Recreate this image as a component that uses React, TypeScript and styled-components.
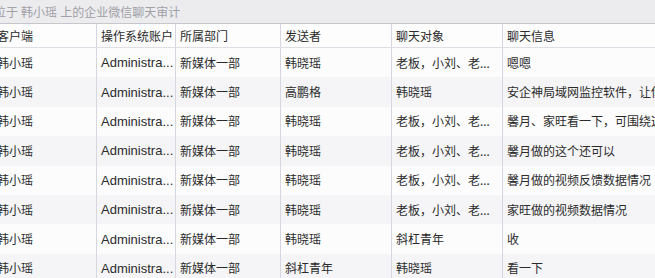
import styled, { createGlobalStyle } from "styled-components";

const GlobalStyle = createGlobalStyle`
  html, body {
    margin: 0;
    padding: 0;
    background: #fdfdfd;
    overflow: hidden;
  }
  body {
    font-family: "Noto Sans", "Noto Sans CJK SC", sans-serif;
    font-size: 12px;
    color: #2b2b2b;
  }
`;

const COLS = "104px 79px 105px 111px 111px 220px";

const Panel = styled.div`
  width: 655px;
  height: 278px;
  overflow: hidden;
`;

const TitleBar = styled.div`
  height: 23px;
  border-bottom: 1px solid #c6c6cc;
  background: #ececef;
  color: #a0a0a6;
  display: flex;
  align-items: center;
  white-space: pre;
  margin-left: -7px;
  padding-left: 1px;
`;

const Scroller = styled.div`
  margin-left: -7px;
  width: 730px;
`;

const Row = styled.div<{ $header?: boolean; $odd?: boolean }>`
  display: grid;
  grid-template-columns: ${COLS};
  height: ${(p) => (p.$header ? "23px" : "29.4px")};
  background: ${(p) => (p.$header ? "#fdfdfd" : p.$odd ? "#f5f5f7" : "#fcfcfd")};
  border-bottom: ${(p) => (p.$header ? "1px solid #dedee4" : "none")};
`;

const Cell = styled.div<{ $latin?: boolean }>`
  display: flex;
  align-items: center;
  padding-left: 4px;
  border-right: 1px solid #d6d6e0;
  white-space: nowrap;
  overflow: hidden;
  font-family: ${(p) =>
    p.$latin ? `"Liberation Sans", "Noto Sans CJK SC", sans-serif` : `"Noto Sans", "Noto Sans CJK SC", sans-serif`};
  font-size: ${(p) => (p.$latin ? "13px" : "12px")};
  &:last-child {
    border-right: none;
  }
`;

const headers = ["客户端", "操作系统账户", "所属部门", "发送者", "聊天对象", "聊天信息"];

const many = "老板，小刘、老...";

const rows: string[][] = [
  ["韩小瑶", "Administra...", "新媒体一部", "韩晓瑶", many, "嗯嗯"],
  ["韩小瑶", "Administra...", "新媒体一部", "高鹏格", "韩晓瑶", "安企神局域网监控软件，让你的企业更安全"],
  ["韩小瑶", "Administra...", "新媒体一部", "韩晓瑶", many, "馨月、家旺看一下，可围绕这个方向做"],
  ["韩小瑶", "Administra...", "新媒体一部", "韩晓瑶", many, "馨月做的这个还可以"],
  ["韩小瑶", "Administra...", "新媒体一部", "韩晓瑶", many, "馨月做的视频反馈数据情况"],
  ["韩小瑶", "Administra...", "新媒体一部", "韩晓瑶", many, "家旺做的视频数据情况"],
  ["韩小瑶", "Administra...", "新媒体一部", "韩晓瑶", "斜杠青年", "收"],
  ["韩小瑶", "Administra...", "新媒体一部", "斜杠青年", "韩晓瑶", "看一下"],
];

export default function App() {
  return (
    <>
      <GlobalStyle />
      <Panel>
        <TitleBar>位于 韩小瑶 上的企业微信聊天审计</TitleBar>
        <Scroller>
          <Row $header>
            {headers.map((h) => (
              <Cell key={h}>{h}</Cell>
            ))}
          </Row>
          {rows.map((r, i) => (
            <Row key={i} $odd={i % 2 === 1}>
              {r.map((c, j) => (
                <Cell key={j} $latin={j === 1}>
                  {c}
                </Cell>
              ))}
            </Row>
          ))}
        </Scroller>
      </Panel>
    </>
  );
}
